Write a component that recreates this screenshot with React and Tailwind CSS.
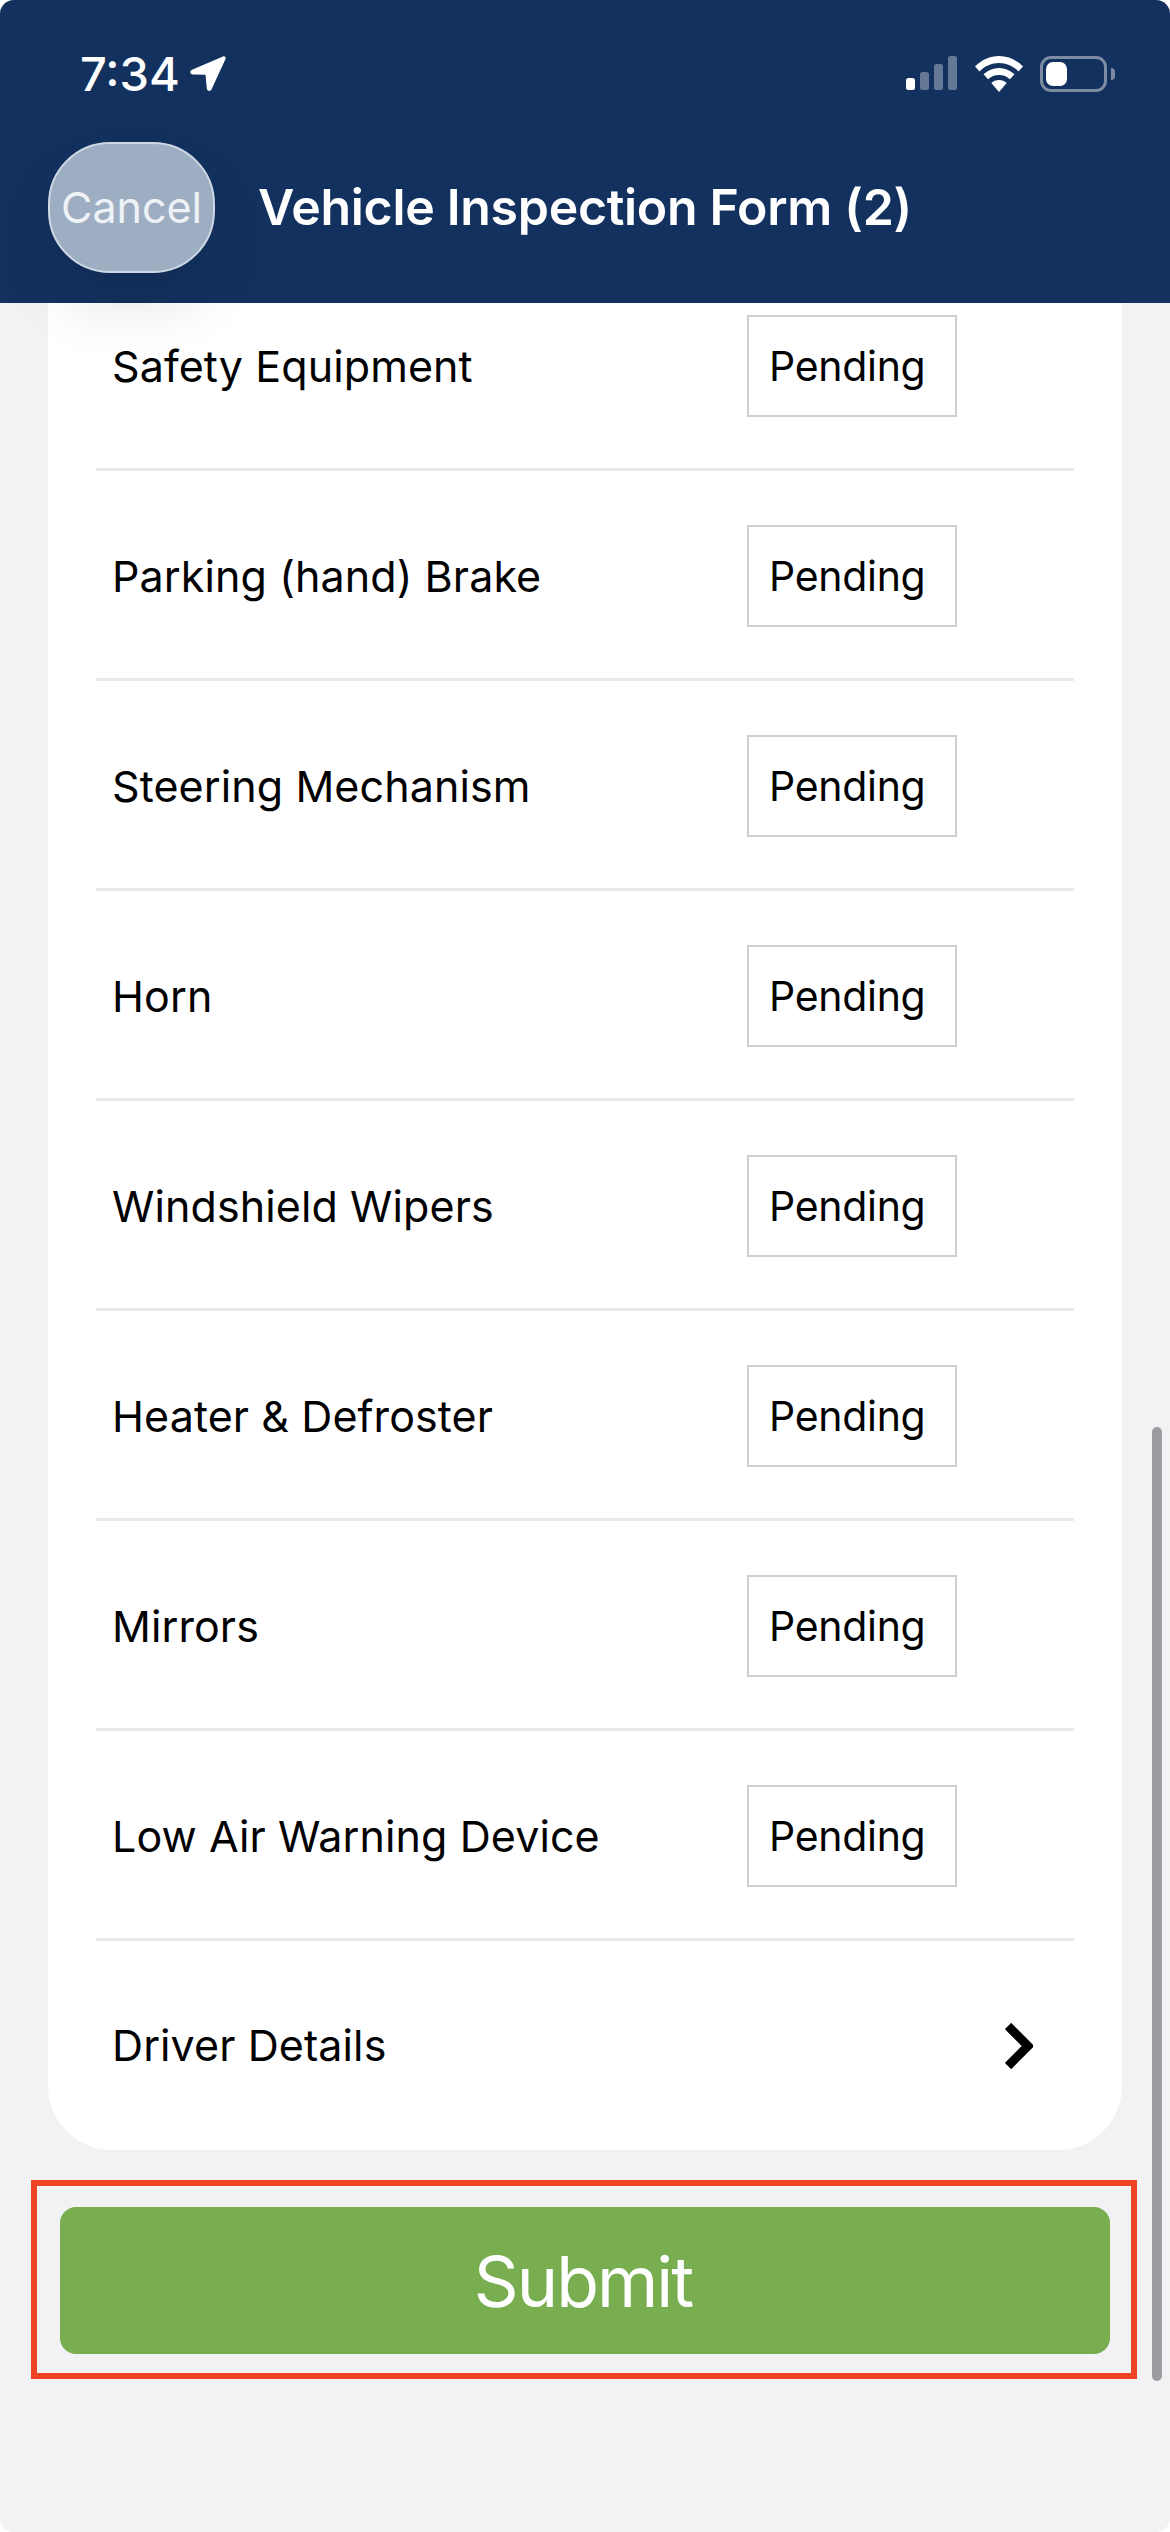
import React from 'react';

const items = [
  'Safety Equipment',
  'Parking (hand) Brake',
  'Steering Mechanism',
  'Horn',
  'Windshield Wipers',
  'Heater & Defroster',
  'Mirrors',
  'Low Air Warning Device',
];

const StatusIcons = () => (
  <div className="flex items-center">
    <svg width="52" height="36" viewBox="0 0 52 36" fill="#fff">
      <rect x="0" y="22" width="9" height="12" rx="2.5" />
      <rect x="14" y="16" width="9" height="18" rx="2.5" opacity="0.35" />
      <rect x="28" y="8" width="9" height="26" rx="2.5" opacity="0.35" />
      <rect x="42" y="0" width="9" height="34" rx="2.5" opacity="0.35" />
    </svg>
    <svg className="ml-[17px]" width="48" height="36" viewBox="0 0 48 36" fill="#fff">
      <path d="M24 0C15 0 7 3.500 0 10.500l4.500 4.900C10 10 16.600 7 24 7s14 3 19.500 8.400l4.500-4.900C41 3.500 33 0 24 0z" />
      <path d="M24 12c-6 0-11.300 2.300-15.500 6.300l4.600 5C16 20.500 19.800 19 24 19s8 1.500 10.900 4.300l4.600-5C35.300 14.300 30 12 24 12z" />
      <path d="M24 24c-3 0-5.700 1.100-7.700 3L24 36l7.700-9c-2-1.900-4.700-3-7.700-3z" />
    </svg>
    <div className="ml-[17px] flex items-center">
      <div className="w-[67px] h-[36px] rounded-[11px] border-[3px] border-[#7d8ba3] p-[3px] flex items-stretch">
        <div className="w-[21px] bg-white rounded-[7px]" />
      </div>
      <div className="ml-[4px] w-[4px] h-[12px] bg-[#7d8ba3] rounded-r-full" />
    </div>
  </div>
);

const Row = ({ label }) => (
  <div className="h-[210px] pt-[3px] flex items-center border-b-[3px] border-[#e8e9ec] pl-[16px]">
    <span className="flex-1 text-[43px] text-black tracking-[0.1px]">{label}</span>
    <div className="w-[210px] h-[102px] mr-[117px] pl-[20px] pt-[2px] border-[2px] border-[#cfcfcf] flex items-center text-[41px] tracking-[-0.3px] text-black">
      Pending
    </div>
  </div>
);

export default function App() {
  return (
    <div className="relative w-[1170px] h-[2532px] overflow-hidden rounded-[14px] bg-[#f2f2f5] flex flex-col font-['Inter',sans-serif]">
      <header className="relative z-10 h-[303px] bg-[#13315f] shrink-0">
        <div className="flex items-center justify-between pt-[55px] pl-[80px] pr-[55px] h-[92px]">
          <div className="flex items-center">
            <span className="text-[47px] leading-none font-medium text-white">7:34</span>
            <svg className="ml-[10px]" width="36" height="35" viewBox="0 0 36 35" fill="#fff">
              <path d="M33 0.400 2 13.800c-2.600 1.200-2 4.600 0.800 4.700l12.700 0.300 1.300 13.700c0.300 2.800 3.700 3.300 4.800 0.800L35.500 2.900C36.200 1.200 34.700-0.300 33 0.400z" />
            </svg>
          </div>
          <StatusIcons />
        </div>
        <div className="flex items-center pl-[48px] mt-[50px]">
          <div className="w-[167px] h-[131px] rounded-[62px] bg-[#9eaec2] border-[2px] border-[#cdd8e4] flex items-center justify-center text-[43px] text-[#eef2f6] shadow-[0_34px_60px_rgba(0,0,0,0.1)]">
            Cancel
          </div>
          <h1 className="ml-[43px] text-[50px] font-semibold tracking-[-0.3px] text-white">Vehicle Inspection Form (2)</h1>
        </div>
      </header>

      <main className="flex-1 min-h-0">
        <div className="-mt-[42px] mx-[48px] bg-white rounded-b-[64px] px-[48px]">
          {items.map((label) => (
            <Row key={label} label={label} />
          ))}
          <div className="h-[209px] flex items-center justify-between pl-[16px]">
            <span className="text-[43px] text-black tracking-[0.1px]">Driver Details</span>
            <svg className="mr-[41px]" width="28" height="46" viewBox="0 0 28 46" fill="none" stroke="#000" strokeWidth="9" strokeLinejoin="miter">
              <path d="M3 3l20 20L3 43" />
            </svg>
          </div>
        </div>

        <div className="mt-[30px] ml-[31px] w-[1106px] border-[6px] border-[#ee4325] pt-[21px] pb-[19px] pl-[23px] pr-[21px]">
          <button type="button" className="w-full h-[147px] pt-[3px] pr-[4px] rounded-[16px] bg-[#78ae50] text-white text-[70px] tracking-[-2px] leading-none">
            Submit
          </button>
        </div>
      </main>

      {/* overlay scrollbar */}
      <div className="absolute left-[1152px] top-[1427px] w-[10px] h-[954px] rounded-full bg-[#9b9ba0]" />
    </div>
  );
}
